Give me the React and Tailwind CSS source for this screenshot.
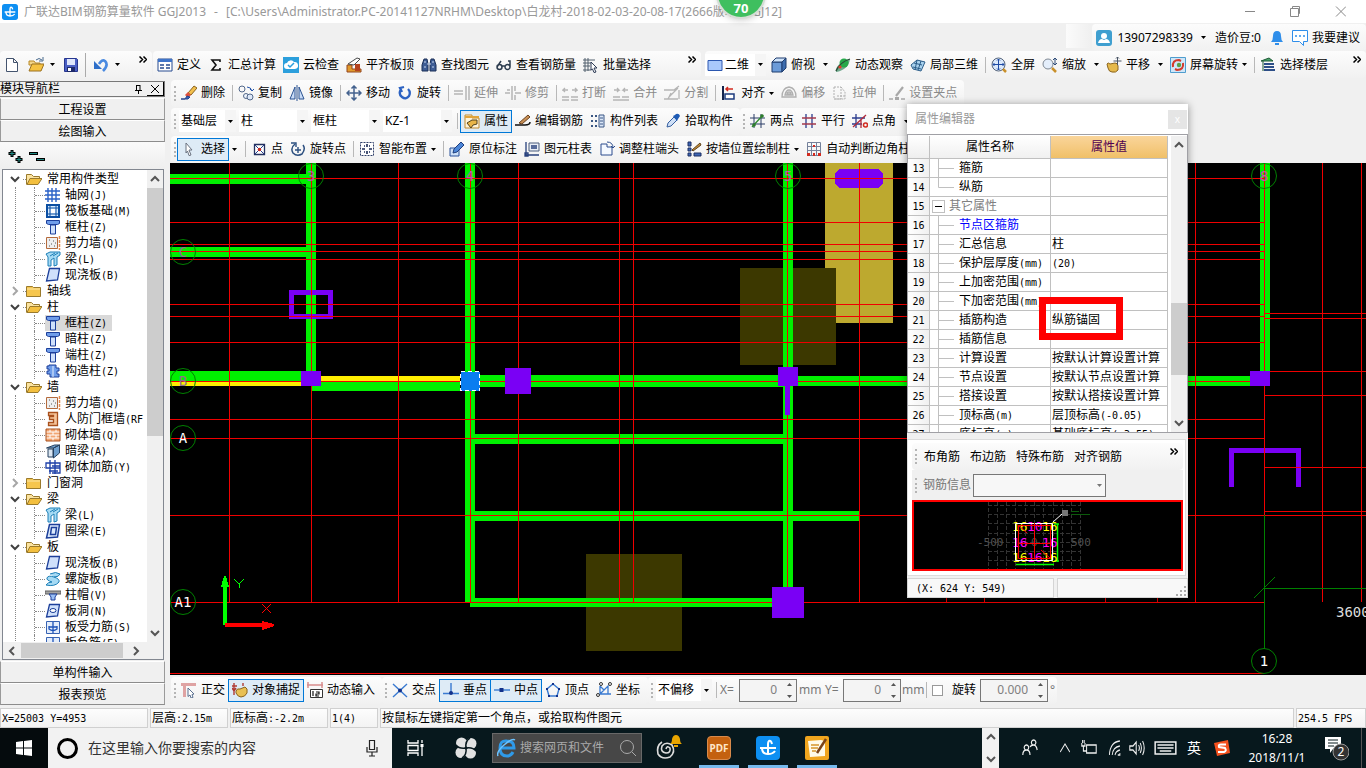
import { Fragment } from 'react';

const ICONS = {
  file: <path d="M2.500 1.500h7l4 4v9h-11zM9.500 1.500v4h4" fill="#fff" stroke="#44546e" />,
  folderOpen: (
    <>
      <path d="M1 4h5l1.500 2H12v2H1z" fill="#f3d58a" stroke="#b98a26" />
      <path d="M1 14 4 7h12l-3 7z" fill="#f5c242" stroke="#9a7120" />
      <path d="M8 3q3-3 6 0M15 0v4h-4" fill="none" stroke="#47688c" />
    </>
  ),
  save: (
    <>
      <path d="M1.500 1.500h12l1 1v12h-13z" fill="#4a5fc4" stroke="#27368f" />
      <path d="M4 2h8v6H4z" fill="#dfe6fb" />
      <path d="M4 10h8v5H4z" fill="#1e2a6b" />
      <path d="M5 11h3v3H5z" fill="#fff" />
    </>
  ),
  undo: (
    <>
      <path d="M6 7q3-5 6-3 4 4-2 10" fill="none" stroke="#4a8ae0" strokeWidth="2.600" />
      <path d="M1 4v8h8z" fill="#2e6fc9" />
    </>
  ),
  define: (
    <>
      <path d="M1 2h14v12H1z" fill="#fff" stroke="#274b8f" />
      <path d="M1 2h14v3H1z" fill="#3f74c9" />
      <path d="M3 8h4M3 11h4M9 8h4M9 11h4" stroke="#274b8f" strokeWidth="1.500" />
    </>
  ),
  sum: <path d="M12 5V3H4l4 5-4 5h8v-2" fill="none" stroke="#111" strokeWidth="1.600" />,
  cloud: (
    <>
      <path d="M0 0h16v16H0z" fill="#2c9fdc" />
      <path d="M4 12a3 3 0 0 1 0-6 4 4 0 0 1 7-1 3.500 3.500 0 0 1 1 7z" fill="#fff" />
      <path d="m5 8 2 2 4-4" fill="none" stroke="#2c9fdc" strokeWidth="1.500" />
    </>
  ),
  slab: (
    <>
      <path d="M1 8h5v4h9v3H1z" fill="#e09a2c" stroke="#93451c" />
      <path d="M9 7h5v7H9z" fill="#b5431f" />
      <path d="M2 7 11 1l3 1-6 6z" fill="#fff" stroke="#4a4a4a" />
    </>
  ),
  find: (
    <>
      <path d="M3 2h3l1 5v7H1V8zM10 2h3l2 6v6H9V7z" fill="#3d5c94" stroke="#1b2f57" />
      <path d="M6 7h4M3 10h2M11 10h2M4 4v2M12 4v2" stroke="#c9d8f2" />
    </>
  ),
  glasses: (
    <path
      d="M1 10a2.500 2.500 0 1 0 5 0 2.500 2.500 0 1 0-5 0M9 10a2.500 2.500 0 1 0 5 0 2.500 2.500 0 1 0-5 0M6 9h3M1 10 5 4M14 10V4h-2"
      fill="none"
      stroke="#2b3b4e"
      strokeWidth="1.500"
    />
  ),
  batch: (
    <>
      <path d="M2 1v14M0 3h12M0 6h8M0 9h7M5 1v13M0 13h8" stroke="#53606f" />
      <path d="m8 5 6 6H11l2 4-2 .5-1.500-3.500L8 13z" fill="#fff" stroke="#2c3a55" />
    </>
  ),
  rect2d: <path d="M1 3.500h14v10H1z" fill="#a9c8fb" stroke="#2c57b0" />,
  cube: (
    <>
      <path d="M1 5h10v10H1z" fill="#6b9bd8" stroke="#1f3d6e" />
      <path d="m1 5 4-4h10l-4 4z" fill="#cfe3fa" stroke="#1f3d6e" />
      <path d="m11 5 4-4v10l-4 4z" fill="#3c6cae" stroke="#1f3d6e" />
    </>
  ),
  orbit: (
    <>
      <path d="M1 15q-1-5 5-9T15 2q-1 7-6 10t-8 3z" fill="#6fa88c" />
      <circle cx="9" cy="6" r="4.500" fill="#27a84a" />
      <path d="M1 14Q5 5 15 2" fill="none" stroke="#274c36" strokeWidth="1.300" />
      <circle cx="5" cy="10" r="1.600" fill="#e23b2b" />
    </>
  ),
  local3d: (
    <>
      <path d="m1 8 6-5 8 2-4 9-8-2z" fill="#a9d2ee" stroke="#2b5c88" />
      <path d="m4 6 8 2M3 10l8 2M7 3 5 13M11 4 8 13" stroke="#2b5c88" fill="none" />
    </>
  ),
  full: (
    <>
      <circle cx="7.500" cy="7.500" r="6.500" fill="#dbe9fb" stroke="#56657c" />
      <path d="M7.500 2v11M2 7.500h11M6 3.500 7.500 2 9 3.500M6 11.500 7.500 13 9 11.500M3.500 6 2 7.500 3.500 9M11.500 6 13 7.500 11.500 9" fill="none" stroke="#1f4ba5" />
      <path d="m12 12 3 3" stroke="#c9902b" strokeWidth="2.500" />
    </>
  ),
  zoom: (
    <>
      <circle cx="6" cy="7" r="5" fill="#e4eefb" stroke="#7f8893" />
      <path d="m10 11 4 4" stroke="#c9902b" strokeWidth="2.500" />
      <path d="M13 1v6M11 3l2-2 2 2M11 6l2 2 2-2" fill="none" stroke="#2f4c79" />
    </>
  ),
  pan: (
    <>
      <path d="M1 7q1-2 3 0l5-1q3 0 3 3v4q-2 3-6 2-3 0-4-4z" fill="#e5b94c" stroke="#8a6420" />
      <path d="M11.500 0v8M7.500 4h8M10 1.500 11.500 0 13 1.500" fill="none" stroke="#4a5666" />
    </>
  ),
  screen: (
    <>
      <path d="M.5.5h15v15H.5z" fill="#cfe6f8" stroke="#4f9dce" />
      <path d="M3 10q-1-7 6-7l2 1M13 6q1 7-6 7l-2-1" fill="none" stroke="#d43a2c" strokeWidth="2" />
      <circle cx="9" cy="8" r="2.200" fill="#58a14a" />
    </>
  ),
  floors: (
    <>
      <path d="M1 4 9 1l4 3z" fill="#4ba36a" stroke="#1d5a36" />
      <path d="M4 7h10M4 10h10M4 13h11" stroke="#2c4e87" strokeWidth="2" />
      <path d="M3 4v10" stroke="#1d5a36" />
    </>
  ),
  erase: (
    <>
      <path d="m7 8 6-7 3 2-6 7z" fill="#f3c04d" stroke="#8a6420" />
      <path d="m4 10 3-3 3 3-3 3z" fill="#e0523c" />
      <path d="M0 14h4l2-3 3 1-2 2z" fill="#3a5fb0" stroke="#26448e" />
    </>
  ),
  copy: (
    <>
      <circle cx="4" cy="4" r="3" fill="none" stroke="#52688a" />
      <circle cx="8" cy="11" r="2.500" fill="#eef4fd" stroke="#52688a" />
      <circle cx="12" cy="12" r="3" fill="#dde8f8" stroke="#52688a" />
      <path d="M9 2q4 0 5 4M12 4l2 2 2-2" fill="none" stroke="#2453a8" />
    </>
  ),
  mirror: <path d="M6 2v12H1zM10 2v12h5zM8 0v16" fill="#c9dcf7" stroke="#2b5391" />,
  move: <path d="M8 1v14M1 8h14M5.500 3.500 8 1l2.500 2.500M5.500 12.500 8 15l2.500-2.500M3.500 5.500 1 8l2.500 2.500M12.500 5.500 15 8l-2.500 2.500" fill="none" stroke="#44628e" strokeWidth="1.500" />,
  rotate: <path d="M4 4q-3 5 1 8 4 3 7-1 2-4-1-7M7 2 3 3l2 4" fill="none" stroke="#2c62c2" strokeWidth="2.300" />,
  extend: <path d="M0 6h9M0 9h9M12 1v14M15 1v14" stroke="#b5b5b5" strokeWidth="1.500" fill="none" />,
  trim: <path d="M0 8h5M10 8h6M7 1v14M10 1v5M10 10v5M2 5h3" stroke="#b5b5b5" strokeWidth="1.500" fill="none" />,
  break: <path d="M0 12h7M9 12h7M0 15h7M9 15h7M6 5H1l2-2M1 5l2 2M10 5h5l-2-2M15 5l-2 2" stroke="#b5b5b5" fill="none" strokeWidth="1.300" />,
  merge: <path d="M0 12h7M9 12h7M0 15h16M1 5h5L4 3M6 5 4 7M15 5h-5l2-2M10 5l2 2" stroke="#b5b5b5" fill="none" strokeWidth="1.300" />,
  split: <path d="M0 5h10l5-4M0 14h14M4 14l3-6M15 5v9M5 12l9-9" stroke="#b5b5b5" fill="none" strokeWidth="1.300" />,
  align: (
    <>
      <path d="M2 1v14" stroke="#14244c" strokeWidth="2" />
      <path d="M4 9h9v5H4z" fill="#fff" stroke="#1d3b7e" strokeWidth="1.500" />
      <path d="M12 4H5M7 2 5 4l2 2" stroke="#d22a1f" fill="none" strokeWidth="1.500" />
    </>
  ),
  offset: <path d="M1 12q0-9 7-10 7 1 7 10zM4 10q1-5 4-5t4 5zM6 9a2 2 0 0 1 4 0z" fill="none" stroke="#b0b0b0" strokeWidth="1.300" />,
  stretch: <path d="M2 2h7v12H2zM9 2l4 5v7H2M5 11h9" fill="none" stroke="#b0b0b0" strokeDasharray="2 1" />,
  grips: (
    <>
      <path d="M0 14h4M12 14h4" stroke="#a8a8a8" strokeWidth="1.500" />
      <path d="M6 12h4v3H6z" fill="#a8a8a8" />
      <path d="m7 11 7-9" stroke="#a8a8a8" strokeWidth="2.200" />
    </>
  ),
  props: (
    <>
      <path d="M1 2h7v3h7v10H1z" fill="#fdf3d9" stroke="#c08a2e" />
      <path d="M1 4h14" stroke="#e0a43c" strokeWidth="2" />
      <path d="M3 10l5-3h5v4l-4 1-2 3z" fill="#e9b548" stroke="#53431c" />
    </>
  ),
  editBar: (
    <>
      <path d="M0 12h10q5 0 5-3" fill="none" stroke="#111" strokeWidth="1.500" />
      <path d="m4 10 9-8 2 2-8 7z" fill="#c98f55" stroke="#6a4320" />
    </>
  ),
  list: (
    <>
      <path d="M1 3h2M1 8h2M1 13h2M5 3h2M5 8h2M5 13h2" stroke="#3a5784" strokeWidth="2" />
      <path d="M9 2h5v12H9z" fill="#dbe7f8" stroke="#3a5784" />
      <path d="M10 5h3M10 8h3M10 11h3" stroke="#3a5784" />
    </>
  ),
  picker: (
    <>
      <path d="m2 14 1-4 6-6 3 3-6 6z" fill="#cfe0f7" stroke="#355f9f" />
      <path d="m8 3 2-1 1-1q3-1 4 2l-2 3-1 2z" fill="#1e5bb5" />
    </>
  ),
  twoPoint: (
    <>
      <path d="M0 5h15M0 11h15M4 1v14M11 1v14" stroke="#2b3d67" />
      <path d="M2 14 13 2" stroke="#2e8b2e" strokeWidth="1.300" />
      <circle cx="4" cy="12" r="1.800" fill="#2d7b2d" />
      <circle cx="12" cy="3" r="1.800" fill="#2d7b2d" />
    </>
  ),
  parallel: (
    <>
      <path d="M5 1v14M11 1v14" stroke="#2b3d8f" strokeWidth="1.300" />
      <path d="M1 5h14M1 11h14" stroke="#a43a4e" strokeWidth="1.300" />
    </>
  ),
  angle: (
    <>
      <path d="M0 5h13M4 1v14M0 11h10" stroke="#2b3d8f" strokeWidth="1.300" />
      <path d="M1 14 14 2M9 6v9" stroke="#b32a3a" strokeWidth="1.300" />
      <circle cx="13.500" cy="12" r="2" fill="none" stroke="#d22a1f" strokeWidth="1.500" />
    </>
  ),
  select: <path d="m5 2 6 7H8l2 5-2 .6L6.500 10 5 12z" fill="#fff" stroke="#6a7280" />,
  point: (
    <>
      <path d="M3.500 3.500h10v10h-10z" fill="#fff" stroke="#23305e" strokeWidth="1.300" />
      <path d="m4 4 9 9M13 4l-9 9" stroke="#27408f" />
      <circle cx="8.500" cy="8.500" r="1.700" fill="#d22a1f" />
    </>
  ),
  rotPoint: (
    <>
      <path d="M5 3q-5 4-2 9 4 4 9 1 4-5 1-9" fill="none" stroke="#2d5080" strokeWidth="1.500" />
      <path d="M8 6v6M5 9h6M1 2h5v4" stroke="#2d5080" strokeWidth="1.400" fill="none" />
    </>
  ),
  smart: (
    <>
      <path d="M1.500 1.500h13v13h-13z" fill="#fff" stroke="#30406a" strokeDasharray="2 1" />
      <path d="M5 5h1M10 5h1M5 11h1M10 11h1M8 3v3M8 10v3M3 8h3M10 8h3" stroke="#1a2a55" strokeWidth="1.600" />
    </>
  ),
  annotate: (
    <>
      <path d="M1 7h9v8H1z" fill="#cde0f8" stroke="#28519b" />
      <path d="m4 12 1-4 7-7 3 3-7 7z" fill="#4c86d8" stroke="#1f3e7c" />
    </>
  ),
  colTable: (
    <>
      <path d="M5 2h10v8H5z" fill="#e8edf5" stroke="#4a5c7c" />
      <path d="M7 5h6M7 7h6M2 1v13h13M1 12h3v3H1z" stroke="#27407c" fill="none" strokeWidth="1.300" />
    </>
  ),
  colEnd: (
    <>
      <path d="M2 3h6v3h5v8H2z" fill="#f5f9ff" stroke="#2d4d8e" />
      <path d="M8 1q6 0 6 6M12 5l2 2 2-2" fill="none" stroke="#2d4d8e" />
    </>
  ),
  wallCol: (
    <>
      <path d="M2 1h3v4H2zM2 7h3v3H2zM2 12h3v3H2zM8 12h7v3H8z" fill="#3e66b5" stroke="#1d2f63" />
      <path d="m6 9 8-7 1 2-8 6z" fill="#c98f3a" stroke="#5e431c" />
    </>
  ),
  cornerCol: (
    <>
      <path d="M1.500 1.500h13v13h-13zM1 5.500h14M1 9.500h14M5.500 1v14M10.500 1v14" stroke="#74819b" fill="none" />
      <path d="M1 12h3v3H1zM12 12h3v3h-3zM7 4h2v2H7zM7 12h2v3H7z" fill="#d22a1f" />
    </>
  ),
  ortho: (
    <>
      <path d="M0 1h15v3H5v11H2V4H0z" fill="#dfa3a3" />
      <path d="m7 6 6 6-2 .5 1 3-2 .5-1-3-2 1.500z" fill="#fff" stroke="#5b7190" />
    </>
  ),
  snap: (
    <>
      <path d="M2 1v12M0 6l2 3 2-3M11 1v3M0 4h5" stroke="#b03a33" fill="none" strokeWidth="1.400" />
      <path d="M4 9q1-3 4-2l5-2q3 1 2 6-2 4-6 4-3 0-5-4z" fill="#e8c054" stroke="#8a6420" />
    </>
  ),
  dynInput: (
    <>
      <path d="M0 3h16M1 0v6M15 0v6" stroke="#d88d8d" strokeWidth="1.500" />
      <path d="M3.500 7.500h12v8h-12z" fill="#fff" stroke="#333" />
      <path d="M6 9v5M9 10h3v2H9v2h3" fill="none" stroke="#111" strokeWidth="1.200" />
    </>
  ),
  cross: (
    <>
      <path d="m1 2 14 13M15 2 1 15" stroke="#3a7ad1" strokeWidth="1.400" />
      <circle cx="8" cy="8.500" r="2" fill="#12318b" />
    </>
  ),
  perp: (
    <>
      <path d="M8 1v10M0 11.500h16" stroke="#3a7ad1" strokeWidth="1.400" />
      <circle cx="8" cy="11" r="2" fill="#12318b" />
    </>
  ),
  mid: (
    <>
      <path d="M0 8h16" stroke="#3a7ad1" strokeWidth="1.400" />
      <path d="M5.500 6h4v4h-4z" fill="#12318b" />
    </>
  ),
  vertex: (
    <>
      <path d="m8 2 6 5-2 7H4L2 7z" fill="none" stroke="#3a7ad1" strokeWidth="1.400" />
      <path d="M7 1h2v2H7zM13 6h2v2h-2zM11 13h2v2h-2zM3 13h2v2H3zM1 6h2v2H1z" fill="#12318b" />
    </>
  ),
  coord: (
    <>
      <path d="M4 4v8h11M4 12l8-8v8M8 8l-4-4" stroke="#3a7ad1" fill="none" strokeWidth="1.300" />
      <circle cx="2" cy="13" r="1.500" fill="none" stroke="#333" />
      <circle cx="5" cy="2" r="1.500" fill="none" stroke="#333" />
      <circle cx="14" cy="2" r="1.500" fill="none" stroke="#333" />
    </>
  ),
  folder: (
    <>
      <path d="M.5 3.500h6l1 1h7v9H.5z" fill="#f6c64e" stroke="#9a7a2c" />
      <path d="M1 6h13" stroke="#fbe6a8" />
    </>
  ),
  treeOpen: (
    <>
      <path d="M.5 13.500v-10h5l2 2h6v2" fill="#fbe3a0" stroke="#9a7a2c" />
      <path d="m1 13.500 3-6h12l-4 6z" fill="#f3bf3e" stroke="#9a7a2c" />
    </>
  ),
  axis: <path d="M0 4h15M0 8h15M0 12h15M3 1v14M7 1v14M11 1v14" stroke="#2b62c8" strokeWidth="1.400" />,
  raft: (
    <>
      <path d="M2 2h12v12H2z" fill="#d8ecff" stroke="#0b4ea2" strokeWidth="2" />
      <path d="M5 2v12M11 2v12M2 5h12M2 11h12" stroke="#0b4ea2" />
      <path d="M6 6h4v4H6z" fill="#fff" />
    </>
  ),
  column: (
    <>
      <path d="M1.500 1.500h13v3l-2 1h-9l-2-1z" fill="#6f9dea" stroke="#1c3f9a" />
      <path d="M5.500 6h5v9h-5z" fill="#cfe0fb" stroke="#1c3f9a" />
    </>
  ),
  shear: (
    <>
      <path d="M1.500 2.500h11v11h-11z" fill="#efefef" stroke="#b56a3c" />
      <path d="M4 5h1M8 6h1M6 9h1M4 11h1M9 11h1M10 8h1" stroke="#555" />
      <path d="M14.500 1v14" stroke="#e28a4e" strokeWidth="1.500" strokeDasharray="3 1" />
    </>
  ),
  beam: (
    <>
      <path d="M1 3 5 1h10v3l-3 2v8l-3 1V7L6 9v6H3V6z" fill="#a5daf4" stroke="#1d7fb7" />
      <path d="m5 5 5-3M8 5l5-3" stroke="#1d7fb7" />
    </>
  ),
  plate: <path d="m4.500 1.500 10 0-2 11.500-11 1z" fill="#cfe0fb" stroke="#1c3f9a" strokeWidth="1.300" />,
  structCol: (
    <>
      <path d="M4 2h7v3h3v3h-2v3h2v3H5v-3H2V8h2V6H2V3h2z" fill="#6f9dea" stroke="#1c3f9a" />
      <path d="M8 3v11" stroke="#e6effd" />
    </>
  ),
  doorWall: <path d="M3.500 1.500h9v13h-9v-3h5v-3h-4v-3h4v-1h-5z" fill="#f6c49a" stroke="#a9501c" strokeWidth="1.300" />,
  brick: (
    <>
      <path d="M1 2h14v12H1z" fill="#f2a673" />
      <path d="M1 5h14M1 8h14M1 11h14M5 2v3M11 2v3M8 5v3M5 8v3M11 8v3M8 11v3" stroke="#fff" />
      <path d="M1 2h14v12H1z" fill="none" stroke="#a9501c" />
    </>
  ),
  hiddenBeam: (
    <>
      <path d="m1.500 5 8-3h5l-6 3zM8.500 5l6-3v8l-6 5z" fill="#6fa0cf" stroke="#27405e" />
      <path d="M3 6h5v8H3z" fill="#dbe6f1" stroke="#27405e" />
    </>
  ),
  masonry: <path d="M1 4h14v5H1zM4 12h9M5 1v14M10 1v14M7 7h8v7H7" fill="none" stroke="#1c3fa8" strokeWidth="1.300" />,
  ringBeam: <path d="m4.500 1.500 10 0-2 12.500-11 1zM6.500 4.500h5l-1 7h-5z" fill="#dbe9fc" stroke="#1c3f9a" strokeWidth="1.500" />,
  spiral: <path d="M5 3q6-3 10 0-1 3-6 3 6 2 5 5-4 5-13 3 2-3 6-3-6-2-5-4 1-3 7-1" fill="#a5daf4" stroke="#1d7fb7" />,
  cap: (
    <>
      <path d="M0 4h16v3H0z" fill="#a3a3a3" stroke="#5d5d5d" />
      <path d="M4 7h8l-2 3v3H6v-3z" fill="#9bc0f5" stroke="#1c3f9a" />
    </>
  ),
  hole: (
    <>
      <path d="m4.500 1.500 10 0-2 11.500-11 1z" fill="#cfe0fb" stroke="#1c3f9a" strokeWidth="1.300" />
      <ellipse cx="8" cy="7.500" rx="3" ry="2" fill="#fff" stroke="#1c3f9a" />
    </>
  ),
  rebar: (
    <>
      <path d="M1.500 2.500h13v12h-13z" fill="#e3edfb" stroke="#3763b3" />
      <path d="M8 3v11M4 7v3q4 3 8 0V7M4 8h8" fill="none" stroke="#1c52b8" strokeWidth="1.300" />
    </>
  ),
};

const Icon = ({ name }) => (
  <svg className="h-4 w-4 shrink-0" viewBox="0 0 16 16" aria-hidden="true">
    {ICONS[name]}
  </svg>
);

const Arrow = () => (
  <svg className="h-[3px] w-[5px] shrink-0" viewBox="0 0 5 3" aria-hidden="true">
    <path d="M0 0h5L2.500 3z" fill="currentColor" />
  </svg>
);

const Logo = ({ className }) => (
  <svg className={className} viewBox="0 0 24 24" aria-hidden="true">
    <rect width="24" height="24" rx="4" fill="#0d8ff2" />
    <path d="M16 8q-1-4-3-3-1 1-1 3v10M4 12h16M6 12q0 6 6 6 5 0 7-3" fill="none" stroke="#fff" strokeWidth="2" />
  </svg>
);

// Fixed pitch look: ascii runs are half the width of a CJK glyph
const Song = ({ children }) =>
  children.split(/([\x20-\x7e]+)/).map((part, i) =>
    i % 2 ? (
      <span key={i} className="font-['DejaVu_Sans_Mono',monospace] text-[10px] leading-none whitespace-pre">
        {part}
      </span>
    ) : (
      <Fragment key={i}>{part}</Fragment>
    )
  );

const Sep = () => <span className="mr-[5px] h-4 w-px shrink-0 bg-[#b8b8b8]" />;

const Grip = () => <span className="mr-[5px] ml-[3px] h-[15px] w-0 shrink-0 border-l-2 border-dotted border-[#b5b5b5]" />;

const Tool = ({ icon, label, active, disabled, arrow }) => {
  const look = active ? 'h-[23px] border border-[#0078d7] bg-[#deebf6] px-[3px] mr-[3px] -ml-1' : 'mr-[7px]';
  return (
    <button disabled={disabled} className={`flex shrink-0 items-center whitespace-nowrap ${look} ${disabled ? 'text-[#8a8a8a]' : ''}`}>
      <Icon name={icon} />
      <span className="ml-1">{label}</span>
      {arrow && (
        <span className={arrow === 'wide' ? 'flex w-[13px] justify-end' : 'flex w-[9px] justify-end'}>
          <Arrow />
        </span>
      )}
    </button>
  );
};

const Tools = ({ items }) => items.map((item, i) => (item === '|' ? <Sep key={i} /> : <Tool key={i} {...item} />));

const Group = ({ children, className = '' }) => (
  <div className={`flex h-[27px] shrink-0 items-center rounded-sm bg-gradient-to-b from-[#fcfcfc] to-[#f1f1f1] ${className}`}>{children}</div>
);

const Combo = ({ label, value, className }) => (
  <label className={`relative flex shrink-0 items-center bg-white ${className}`}>
    <select aria-label={label} className="h-[22px] w-full appearance-none pl-[2px] outline-none">
      <option>{value}</option>
    </select>
    <span className="pointer-events-none absolute right-0 flex h-[22px] w-[11px] items-center justify-center bg-[#f5f5f5]">
      <Arrow />
    </span>
  </label>
);

const More = () => (
  <button aria-label="更多" className="mr-[5px] ml-auto flex h-[21px] items-start pt-[2px]">
    <svg className="h-[7px] w-2" viewBox="0 0 8 7">
      <path d="m.5.5 3 3-3 3M4.500.5l3 3-3 3" fill="none" stroke="#000" strokeWidth="1.500" />
    </svg>
  </button>
);

const fileTools = [
  { icon: 'define', label: '定义' },
  { icon: 'sum', label: '汇总计算' },
  { icon: 'cloud', label: '云检查' },
  { icon: 'slab', label: '平齐板顶' },
  { icon: 'find', label: '查找图元' },
  { icon: 'glasses', label: '查看钢筋量' },
  { icon: 'batch', label: '批量选择' },
];

const viewTools = [
  { icon: 'cube', label: '俯视', arrow: 'wide' },
  { icon: 'orbit', label: '动态观察' },
  { icon: 'local3d', label: '局部三维' },
  '|',
  { icon: 'full', label: '全屏' },
  { icon: 'zoom', label: '缩放', arrow: 'wide' },
  { icon: 'pan', label: '平移', arrow: 'wide' },
  { icon: 'screen', label: '屏幕旋转', arrow: 'tight' },
  '|',
  { icon: 'floors', label: '选择楼层' },
];

const editTools = [
  { icon: 'erase', label: '删除' },
  '|',
  { icon: 'copy', label: '复制' },
  { icon: 'mirror', label: '镜像' },
  '|',
  { icon: 'move', label: '移动' },
  { icon: 'rotate', label: '旋转' },
  '|',
  { icon: 'extend', label: '延伸', disabled: true },
  { icon: 'trim', label: '修剪', disabled: true },
  '|',
  { icon: 'break', label: '打断', disabled: true },
  { icon: 'merge', label: '合并', disabled: true },
  { icon: 'split', label: '分割', disabled: true },
  '|',
  { icon: 'align', label: '对齐', arrow: 'tight' },
  { icon: 'offset', label: '偏移', disabled: true },
  { icon: 'stretch', label: '拉伸', disabled: true },
  '|',
  { icon: 'grips', label: '设置夹点', disabled: true },
];

const memberTools = [
  { icon: 'props', label: '属性', active: true },
  { icon: 'editBar', label: '编辑钢筋' },
  { icon: 'list', label: '构件列表' },
  { icon: 'picker', label: '拾取构件' },
];

const axisTools = [
  { icon: 'twoPoint', label: '两点' },
  { icon: 'parallel', label: '平行' },
  { icon: 'angle', label: '点角', arrow: 'wide' },
];

const drawTools = [
  { icon: 'point', label: '点' },
  { icon: 'rotPoint', label: '旋转点' },
  '|',
  { icon: 'smart', label: '智能布置', arrow: 'tight' },
  '|',
  { icon: 'annotate', label: '原位标注' },
  { icon: 'colTable', label: '图元柱表' },
  { icon: 'colEnd', label: '调整柱端头' },
  { icon: 'wallCol', label: '按墙位置绘制柱', arrow: 'tight' },
  { icon: 'cornerCol', label: '自动判断边角柱' },
];

const tree = [
  { label: '常用构件类型', open: true, items: [['axis', '轴网(J)'], ['raft', '筏板基础(M)'], ['column', '框柱(Z)'], ['shear', '剪力墙(Q)'], ['beam', '梁(L)'], ['plate', '现浇板(B)']] },
  { label: '轴线', items: [] },
  { label: '柱', open: true, items: [['column', '框柱(Z)', true], ['column', '暗柱(Z)'], ['column', '端柱(Z)'], ['structCol', '构造柱(Z)']] },
  { label: '墙', open: true, items: [['shear', '剪力墙(Q)'], ['doorWall', '人防门框墙(RF'], ['brick', '砌体墙(Q)'], ['hiddenBeam', '暗梁(A)'], ['masonry', '砌体加筋(Y)']] },
  { label: '门窗洞', items: [] },
  { label: '梁', open: true, items: [['beam', '梁(L)'], ['ringBeam', '圈梁(E)']] },
  { label: '板', open: true, items: [['plate', '现浇板(B)'], ['spiral', '螺旋板(B)'], ['cap', '柱帽(V)'], ['hole', '板洞(N)'], ['rebar', '板受力筋(S)'], ['rebar', '板负筋(F)']] },
];

const Chevron = ({ dir, className = '' }) => {
  const paths = { down: 'm1 3 4 4 4-4', up: 'm1 7 4-4 4 4', left: 'M7 1 3 5l4 4', right: 'm3 1 4 4-4 4' };
  return (
    <svg className={`h-[10px] w-[10px] shrink-0 ${className}`} viewBox="0 0 10 10" aria-hidden="true">
      <path d={paths[dir]} fill="none" stroke="currentColor" strokeWidth="2" />
    </svg>
  );
};

const SideButton = ({ children }) => (
  <button className="h-[22px] w-full shrink-0 border border-t-white border-r-[#9a9a9a] border-b-[#8c8c8c] border-l-[#9a9a9a] bg-[#f0f0f0] pt-[2px]">{children}</button>
);

const Sidebar = () => (
  <aside className="mr-[5px] flex w-[165px] shrink-0 flex-col bg-[#f0f0f0] pt-[2px] pb-[2px] leading-4">
    <div className="mb-px flex h-4 shrink-0 items-center border-y border-r border-[#777]">
      <span className="flex-1">模块导航栏</span>
      <svg className="mr-[5px] h-[9px] w-[7px]" viewBox="0 0 7 9" aria-hidden="true">
        <path d="M1.500 0v5M5 0v5M0 5.500h7M3.500 5v4M1 .5h4" stroke="#000" fill="none" />
      </svg>
      <button aria-label="关闭" className="flex h-[14px] w-[17px] items-center justify-center border-r border-b border-black">
        <svg className="h-2 w-2" viewBox="0 0 8 8">
          <path d="m0 0 8 8M8 0 0 8" stroke="#000" />
        </svg>
      </button>
    </div>
    <SideButton>工程设置</SideButton>
    <SideButton>绘图输入</SideButton>
    <div className="flex h-[27px] shrink-0 items-center gap-1 bg-gradient-to-b from-[#fafafa] to-[#eee] pl-[6px]">
      <button aria-label="全部展开">
        <svg className="h-[18px] w-[18px]" viewBox="0 0 18 18">
          <path d="M6 3v7M2.500 6.500h7M13 9v7M9.500 12.500h7" stroke="#000" strokeWidth="3" />
          <path d="M6 4v5M3.500 6.500h5M13 10v5M10.500 12.500h5" stroke="#1f8a83" />
        </svg>
      </button>
      <button aria-label="全部折叠">
        <svg className="h-[18px] w-[18px]" viewBox="0 0 18 18">
          <path d="M1 6.500h9M8 12.500h9" stroke="#000" strokeWidth="3" />
          <path d="M2 6.500h7M9 12.500h7" stroke="#1f8a83" />
        </svg>
      </button>
    </div>
    <div className="mr-px ml-[2px] flex min-h-0 flex-1 flex-col border border-[#828790] bg-white">
      <div className="flex min-h-0 flex-1">
        <ul className="flex-1 overflow-hidden pt-px whitespace-nowrap">
          {tree.map((node) => (
            <li key={node.label}>
              <div className="flex h-4 items-center">
                <Chevron dir={node.open ? 'down' : 'right'} className={node.open ? 'ml-[7px] text-[#404040]' : 'ml-[7px] text-[#a6a6a6]'} />
                <span className="ml-[3px] w-[3px] border-t border-dotted border-[#888]" />
                <Icon name={node.open ? 'treeOpen' : 'folder'} />
                <span className="ml-[5px]">{node.label}</span>
              </div>
              <ul className="ml-[12px] border-l border-dotted border-[#888]">
                {node.items.map(([icon, label, selected]) => (
                  <li key={label} className="ml-[18px] flex h-4 items-center border-l border-dotted border-[#888]">
                    <span className="w-[10px] border-t border-dotted border-[#888]" />
                    <button className={selected ? 'flex h-4 items-center bg-[#d9d9d9] pr-[5px]' : 'flex h-4 items-center'}>
                      <Icon name={icon} />
                      <span className="ml-1">
                        <Song>{label}</Song>
                      </span>
                    </button>
                  </li>
                ))}
              </ul>
            </li>
          ))}
        </ul>
        <div className="flex w-4 shrink-0 flex-col items-center bg-[#f0f0f0] py-1 text-[#555]">
          <Chevron dir="up" />
          <span className="mt-1 h-[248px] w-4 bg-[#cdcdcd]" />
          <Chevron dir="down" className="mt-auto" />
        </div>
      </div>
      <div className="flex h-[17px] shrink-0 items-center bg-[#f0f0f0] px-1 text-[#555]">
        <Chevron dir="left" />
        <span className="ml-1 h-[15px] w-[102px] bg-[#cdcdcd]" />
        <Chevron dir="right" className="ml-2" />
      </div>
    </div>
    <div className="mt-px flex flex-col">
      <SideButton>单构件输入</SideButton>
      <SideButton>报表预览</SideButton>
    </div>
  </aside>
);

const gridRows = [178, 222, 244, 251, 259, 304, 316, 342, 381, 419, 438, 515, 602, 673];
const gridRowsRight = [313, 318, 371, 395, 467, 511, 515];
const gridCols = [229, 311, 398, 470, 518, 619, 633, 787, 859, 946, 984, 1105, 1157, 1195, 1322, 1361];

// x, y, width, height
const beams = [
  [170, 174, 136, 10],
  [306, 163, 10, 208],
  [170, 247, 136, 10],
  [170, 371, 131, 10],
  [311, 381, 149, 10],
  [465, 163, 10, 439],
  [475, 375, 312, 12],
  [787, 376, 463, 10],
  [783, 163, 10, 430],
  [475, 434, 308, 10],
  [475, 511, 384, 10],
  [470, 598, 304, 9],
  [1260, 163, 10, 208],
];
const columns = [
  [301, 371, 20, 15],
  [505, 368, 26, 26],
  [778, 367, 20, 19],
  [785, 386, 5, 29],
  [772, 587, 32, 31],
  [1250, 371, 20, 15],
];
const bubbles = [
  [311, 176, '3', '#b05fb0'],
  [470, 176, '4', '#b05fb0'],
  [788, 176, '5', '#b05fb0'],
  [1264, 176, '8', '#d048b0'],
  [183, 252, 'C', '#8f6f8f'],
  [183, 381, 'B', '#8f6f8f'],
  [183, 438, 'A', '#fff'],
  [183, 602, 'A1', '#fff'],
  [1264, 661, '1', '#fff'],
];

const Rects = ({ list, fill }) => list.map(([x, y, w, h]) => <rect key={`${x}-${y}`} x={x} y={y} width={w} height={h} fill={fill} />);

const Drawing = () => (
  <svg className="min-h-0 w-full flex-1 bg-black" viewBox="170 163 1196 512" preserveAspectRatio="xMinYMin slice" fontFamily="DejaVu Sans Mono, monospace">
    <g shapeRendering="crispEdges">
      <rect x="825" y="163" width="68" height="160" fill="#bda92f" />
      <rect x="740" y="268" width="96" height="97" fill="#3c3800" />
      <rect x="586" y="554" width="96" height="97" fill="#3c3800" />
      <rect x="170" y="381" width="131" height="5" fill="#ffee00" />
      <rect x="321" y="376" width="139" height="5" fill="#ffee00" />
      <Rects list={beams} fill="#00f000" />
      <rect x="291.500" y="292.500" width="39" height="24" fill="none" stroke="#7a00f5" strokeWidth="5" />
      <path d="M1231.500 487v-36.500h67V487" fill="none" stroke="#7a00f5" strokeWidth="5" />
      <path d="M839 169h40l4 5v9l-4 5h-40l-4-5v-9z" fill="#7a00f5" />
      <g stroke="#f00000">
        {gridRows.map((y) => (
          <path key={y} d={`M170 ${y + 0.5}H1264`} />
        ))}
        {gridRowsRight.map((y) => (
          <path key={y} d={`M1264 ${y + 0.5}H1366`} />
        ))}
        {gridCols.map((x) => (
          <path key={x} d={`M${x + 0.5} 163V602`} />
        ))}
        <path d="M1264.500 163v352" />
      </g>
      <Rects list={columns} fill="#7a00f5" />
      <rect x="460.500" y="371.500" width="19" height="19" fill="#0a7df0" stroke="#fff" strokeDasharray="4 3" />
      <path d="M1264.500 515v134M1264 588.500h102M1254 598l21-21" stroke="#008000" fill="none" />
      <path d="M223 625v-38h-2l3-11h2l3 11h-2v38z" fill="#00ff00" />
      <path d="M225 623h37v-2l12 3v2l-12 4v-3h-37z" fill="#ff0000" />
      <path d="m234 579 5 5 5-5M239 584v4" stroke="#00ff00" fill="none" />
      <path d="m262 604 9 9M271 604l-9 9" stroke="#ff0000" fill="none" />
    </g>
    {bubbles.map(([x, y, text, color]) => (
      <g key={`${x}-${y}`}>
        <circle cx={x} cy={y} r="12.500" fill="none" stroke="#008000" />
        <text x={x} y={y + 5} fill={color} fontSize="14" textAnchor="middle">
          {text}
        </text>
      </g>
    ))}
    <text x="1336" y="617" fill="#ddd" fontSize="14">
      3600
    </text>
  </svg>
);

const properties = [
  [13, '箍筋', ''],
  [14, '纵筋', ''],
  [15, '其它属性', ''],
  [16, '节点区箍筋', ''],
  [17, '汇总信息', '柱'],
  [18, '保护层厚度(mm)', '(20)'],
  [19, '上加密范围(mm)', ''],
  [20, '下加密范围(mm)', ''],
  [21, '插筋构造', '纵筋锚固'],
  [22, '插筋信息', ''],
  [23, '计算设置', '按默认计算设置计算'],
  [24, '节点设置', '按默认节点设置计算'],
  [25, '搭接设置', '按默认搭接设置计算'],
  [26, '顶标高(m)', '层顶标高(-0.05)'],
  [27, '底标高(m)', '基础底标高(-3.55)'],
];

const PropertyName = ({ id, name }) => {
  if (id === 15) {
    return (
      <span className="flex h-[18px] items-center pl-[2px] text-[#808080]">
        <button aria-label="折叠" className="mr-1 flex h-[13px] w-[13px] items-center justify-center border border-[#c0c0c0]">
          <span className="h-px w-[7px] bg-black" />
        </button>
        {name}
      </span>
    );
  }
  return (
    <span className={id === 16 ? 'flex h-[18px] items-center text-[#0000ff]' : 'flex h-[18px] items-center'}>
      <svg className="mr-[5px] h-[18px] w-6 shrink-0" viewBox="0 0 24 18" aria-hidden="true">
        <path d={id === 14 ? 'M8.500 0v9.500H24' : 'M8.500 0v18M8 9.500h16'} fill="none" stroke="#c0c0c0" />
      </svg>
      <span>
        <Song>{name}</Song>
      </span>
    </span>
  );
};

const SectionPreview = () => (
  <svg className="h-[71px] w-full border-2 border-[#ff0000] bg-black" viewBox="914 502 267 67" fontFamily="DejaVu Sans Mono, monospace">
    <path
      d="M988.500 502v67M997.500 502v67M1006.500 502v67M1015.500 502v67M1025.500 502v67M1034.500 502v67M1043.500 502v67M1053.500 502v67M1062.500 502v67M1071.500 502v67M1080.500 502v67M988 505.500h93M988 514.500h93M988 523.500h93M988 533.500h93M988 542.500h93M988 551.500h93M988 560.500h93"
      stroke="#333"
      strokeDasharray="4 2"
      fill="none"
    />
    <g fill="#505050" fontSize="11">
      <text x="977" y="546">-500</text>
      <text x="1071" y="546">500</text>
      <text x="1031" y="546">0</text>
    </g>
    <path d="M1057.500 524v38M1016 564.500h38M1054 524h5M1054 561h5" stroke="#00ff00" strokeWidth="1.500" />
    <g fontSize="13">
      <text x="1012" y="531" fill="#ffff00">16</text>
      <text x="1027" y="531" fill="#ff00ff">10</text>
      <text x="1042" y="531" fill="#ffff00">16</text>
      <text x="1012" y="547" fill="#ff00ff">16</text>
      <text x="1042" y="547" fill="#ff00ff">16</text>
      <text x="1012" y="562" fill="#ffff00">16</text>
      <text x="1027" y="562" fill="#ff00ff">16</text>
      <text x="1042" y="562" fill="#ffff00">16</text>
    </g>
    <path d="M1015.500 523.500h37v37h-37zM1053 522l9-8" stroke="#fff" fill="none" />
    <path d="M1018.500 525.500h32v33h-32zM1034.500 523v36M1018 543.500h33M1018 525l9 8M1050 558l-9-8" stroke="#ff0000" fill="none" />
    <path d="M1062 510h6v6h-6z" fill="#777" />
    <path d="M1071 511.500h8M1071 514.500h19" stroke="#0b5a0b" />
  </svg>
);

const PropertyPanel = () => (
  <section className="absolute top-[104px] right-[178px] flex w-[281px] flex-col bg-[#f0f0f0] leading-4 shadow-[0_1px_8px_rgba(0,0,0,0.4)]">
    <header className="flex h-[30px] items-center bg-white pl-2 text-[#999]">
      <h2 className="flex-1">属性编辑器</h2>
      <button aria-label="关闭" className="mr-px h-[19px] w-[19px] bg-[#e5e5e5] text-[10px] leading-[17px] text-white">
        x
      </button>
    </header>
    <div className="flex h-[299px] border border-[#a0a0a5] bg-white pt-px">
      <div className="flex-1 overflow-hidden">
        <table className="w-[260px] table-fixed border-separate border-spacing-0 text-left">
          <thead>
            <tr className="h-[23px]">
              <th aria-label="序号" className="w-[22px] border-r border-b border-[#c0c0c0] bg-gradient-to-b from-white to-[#eee]" />
              <th className="w-[121px] border-r border-b border-[#c0c0c0] bg-gradient-to-b from-white to-[#f0f0f0] p-0 text-center font-normal">属性名称</th>
              <th className="border-r border-b border-[#c0c0c0] bg-gradient-to-b from-[#fad59a] to-[#f0c068] p-0 text-center font-normal text-[#500050]">属性值</th>
            </tr>
          </thead>
          <tbody>
            {properties.map(([id, name, value]) => (
              <tr key={id} className="h-[19px] leading-4 whitespace-nowrap">
                <td className="border-r border-b border-[#c0c0c0] bg-gradient-to-r from-white to-[#f0f0f0] p-0 text-center">
                  <Song>{String(id)}</Song>
                </td>
                <td className="overflow-hidden border-r border-b border-[#c0c0c0] p-0">
                  <PropertyName id={id} name={name} />
                </td>
                <td className="border-r border-b border-[#c0c0c0] p-0 pl-px">
                  <Song>{value}</Song>
                </td>
              </tr>
            ))}
          </tbody>
        </table>
      </div>
      <div className="flex w-4 shrink-0 flex-col items-center bg-[#f0f0f0] py-1 text-[#555]">
        <Chevron dir="up" />
        <span className="mt-[153px] h-[72px] w-4 bg-[#cdcdcd]" />
        <Chevron dir="down" className="mt-auto" />
      </div>
    </div>
    <div className="mt-[6px] mr-[2px] flex flex-col border border-[#dcdcdc] bg-white pt-[3px] pr-[2px] pb-1 pl-1">
      <Group>
        <Grip />
        <button className="mr-[10px] ml-[2px]">布角筋</button>
        <button className="mr-[10px]">布边筋</button>
        <button className="mr-[10px]">特殊布筋</button>
        <button>对齐钢筋</button>
        <More />
      </Group>
      <div className="flex h-[30px] items-center bg-[#f0f0f0] text-[#777]">
        <Grip />
        <label htmlFor="bar-info" className="mr-[2px] ml-px">钢筋信息</label>
        <span className="relative flex items-center">
          <select id="bar-info" className="h-[23px] w-[133px] appearance-none border border-[#777] bg-[#f7f7f7]" />
          <span className="pointer-events-none absolute right-1">
            <Arrow />
          </span>
        </span>
      </div>
      <SectionPreview />
    </div>
    <footer className="mt-[2px] flex h-5 gap-[3px]">
      <span className="w-[147px] border border-[#d4d4d4] bg-[#f8f8f8] pl-2 leading-[17px]">
        <Song>(X: 624 Y: 549)</Song>
      </span>
      <span className="flex flex-1 items-end justify-end border border-[#d4d4d4] bg-[#f8f8f8] p-px">
        <svg className="h-[10px] w-[10px]" viewBox="0 0 10 10" aria-hidden="true">
          <path d="M8 0h2v2H8zM4 4h2v2H4zM8 4h2v2H8zM0 8h2v2H0zM4 8h2v2H4zM8 8h2v2H8z" fill="#aaa" />
        </svg>
      </span>
    </footer>
    <div className="pointer-events-none absolute top-[193px] left-[132px] h-[43px] w-[84px] border-[7px] border-[#ff0000]" />
  </section>
);

const Spin = ({ id, value, className }) => (
  <span className={`flex h-[23px] shrink-0 items-center border border-[#777] bg-[#f4f4f4] ${className}`}>
    <input id={id} aria-label={id} defaultValue={value} className="w-0 flex-1 pr-[5px] text-right text-[#808080] outline-none" />
    <span className="flex w-[14px] flex-col items-center gap-[9px] text-[#555]">
      <span className="rotate-180">
        <Arrow />
      </span>
      <Arrow />
    </span>
  </span>
);

const SnapBar = () => (
  <div className="flex h-8 shrink-0 items-center overflow-hidden bg-[#f0f0f0] pb-[2px] pl-px">
    <Group className="w-[211px]">
      <Grip />
      <Tool icon="ortho" label="正交" />
      <Tool icon="snap" label="对象捕捉" active />
      <Tool icon="dynInput" label="动态输入" />
    </Group>
    <Group className="w-[266px]">
      <Grip />
      <Tool icon="cross" label="交点" />
      <Tool icon="perp" label="垂点" active />
      <Tool icon="mid" label="中点" active />
      <Tool icon="vertex" label="顶点" />
      <Tool icon="coord" label="坐标" />
    </Group>
    <Group className="w-[409px] text-[#777]">
      <Grip />
      <Combo label="偏移方式" value="不偏移" className="mr-1 -ml-[2px] w-[56px] text-black" />
      <Sep />
      <label htmlFor="offset-x" className="-ml-[2px] w-[17px]">X=</label>
      <Spin id="offset-x" value="0" className="mx-[2px] w-[58px]" />
      <span className="w-6">mm</span>
      <label htmlFor="offset-y" className="ml-[2px] w-[17px]">Y=</label>
      <Spin id="offset-y" value="0" className="mx-px w-[58px]" />
      <span className="w-6">mm</span>
      <Sep />
      <input id="rotate" type="checkbox" className="h-[11px] w-[11px] shrink-0 appearance-none border border-[#999] bg-white" />
      <label htmlFor="rotate" className="mr-1 ml-[9px] text-black">旋转</label>
      <Spin id="angle" value="0.000" className="w-[68px]" />
      <span className="ml-[2px]">°</span>
    </Group>
  </div>
);

const StatusBar = () => {
  const cells = [
    ['X=25003 Y=4953', 'w-[148px]'],
    ['层高:2.15m', 'w-[78px]'],
    ['底标高:-2.2m', 'w-[98px]'],
    ['1(4)', 'w-[48px]'],
    ['按鼠标左键指定第一个角点，或拾取构件图元', 'flex-1'],
    ['254.5 FPS', 'w-[70px]'],
  ];
  return (
    <footer className="flex h-[21px] shrink-0 gap-[2px] bg-[#f0f0f0] pt-px">
      {cells.map(([text, width]) => (
        <span key={text} className={`border border-[#d0d0d0] bg-gradient-to-b from-[#fdfdfd] to-[#f3f3f3] pl-px leading-[18px] whitespace-nowrap ${width}`}>
          <Song>{text}</Song>
        </span>
      ))}
    </footer>
  );
};

const TrayIcon = ({ d, className = 'w-5' }) => (
  <svg className={`h-5 shrink-0 ${className}`} viewBox="0 0 20 20" preserveAspectRatio="none" aria-hidden="true">
    <path d={d} fill="none" stroke="#f0f0f0" strokeWidth="1.300" />
  </svg>
);

const Taskbar = () => (
  <div className="flex h-10 shrink-0 items-center bg-[#07181d] text-white">
    <button aria-label="开始" className="flex h-full w-12 shrink-0 items-center justify-center bg-[#050b0d]">
      <svg className="h-4 w-4" viewBox="0 0 16 16">
        <path d="m0 2 7-1v6.500H0zM8 1l8-1v7.500H8zM0 8.500h7V15l-7-1zM8 8.500h8V16l-8-1z" fill="#fff" />
      </svg>
    </button>
    <label className="flex h-full w-[344px] shrink-0 items-center bg-[#f2f2f2] px-[9px]">
      <span className="h-[21px] w-[21px] shrink-0 rounded-full border-[3px] border-black" />
      <input placeholder="在这里输入你要搜索的内容" className="ml-[10px] flex-1 text-[14px] text-black outline-none placeholder:text-[#333]" />
      <svg className="mr-[5px] h-[18px] w-3" viewBox="0 0 12 18" aria-hidden="true">
        <path d="M3.500 1.500h5v9h-5zM1 8v5h10V8M6 13v4M3 17h6" fill="none" stroke="#222" strokeWidth="1.200" />
      </svg>
    </label>
    <svg className="ml-[15px] h-4 w-[17px] shrink-0" viewBox="0 0 17 16" aria-hidden="true">
      <path d="M1 0v3h10V0M1 16v-3h10v3M1 5.500h10v5H1zM15 0v3M15 7v9" fill="none" stroke="#fff" strokeWidth="1.300" />
      <path d="M13.500 4h3v3h-3z" fill="#fff" />
    </svg>
    <svg className="ml-[31px] h-[22px] w-[22px] shrink-0" viewBox="0 0 22 22" aria-hidden="true">
      <circle cx="6.500" cy="6" r="5.500" fill="#e2e2e2" />
      <circle cx="16" cy="6.500" r="5.500" fill="#e2e2e2" />
      <circle cx="15.500" cy="16" r="5.500" fill="#e2e2e2" />
      <circle cx="6" cy="15.500" r="5.500" fill="#e2e2e2" />
      <path d="M11 11Q4 12 1 8M11 11q-1-7 4-10M11 11q7-1 10 3M11 11q1 7-4 10" fill="none" stroke="#07181d" strokeWidth="1.500" />
    </svg>
    <label className="ml-[15px] flex h-[30px] w-[150px] shrink-0 items-center border border-[#686868] bg-[#474747] px-1">
      <svg className="h-5 w-5" viewBox="0 0 20 20" aria-hidden="true">
        <path d="M16 14q-2 4-6 4-7 0-7-8t7-7q7 0 7 7H4" fill="none" stroke="#2f9ae8" strokeWidth="3" />
        <path d="M1 18Q-1 14 7 7T18 2" fill="none" stroke="#6cc3ff" strokeWidth="1.500" />
      </svg>
      <input placeholder="搜索网页和文件" className="ml-[3px] w-0 flex-1 outline-none placeholder:text-[#aaa]" />
      <svg className="h-[18px] w-[18px]" viewBox="0 0 18 18" aria-hidden="true">
        <circle cx="8" cy="8" r="6.500" fill="none" stroke="#aaa" />
        <path d="m13 13 4 4" stroke="#aaa" />
      </svg>
    </label>
    <svg className="ml-[13px] h-[30px] w-[30px] shrink-0" viewBox="0 0 30 30" aria-hidden="true">
      <path d="M11 16q1-4 4-1 1 5-4 5-6-1-4-7 4-5 10-1 4 7-2 12-8 3-12-3-2-8 4-12" fill="none" stroke="#ddd" strokeWidth="1.600" />
      <path d="M15 11q2-1 2-5 1-4 4-4t4 4q0 4 2 5zM19 12h4v2h-4z" fill="#e9a500" />
    </svg>
    <div className="ml-[14px] flex h-full items-center gap-[9px]">
      <button aria-label="PDF" className="flex h-full w-10 flex-col items-center border-b-[3px] border-[#76b9ed] pt-2">
        <span className="h-6 w-6 rounded border border-[#d88a4c] bg-[#c4610f] text-center text-[10px] leading-[22px] font-bold text-[#ffe6c8]">PDF</span>
      </button>
      <button aria-label="GGJ2013" className="flex h-full w-10 flex-col items-center border-b-[3px] border-[#76b9ed] pt-2">
        <Logo className="h-6 w-6" />
      </button>
      <button aria-label="笔记" className="flex h-full w-10 flex-col items-center border-b-[3px] border-[#76b9ed] pt-2">
        <svg className="h-6 w-6" viewBox="0 0 24 24">
          <rect width="24" height="24" rx="2" fill="#f0a51e" />
          <path d="M3 5 16 4l4 1v15L5 21z" fill="#fffbe9" />
          <path d="M6 9h8M6 12h7M7 15h4" stroke="#d6952a" strokeWidth="1.500" />
          <path d="m12 17 9-14" stroke="#7c4418" strokeWidth="2.500" />
        </svg>
      </button>
    </div>
    <div className="ml-auto flex h-full w-[17px] shrink-0 flex-col items-center justify-between bg-[#f2f2f2] py-1 text-[#555]">
      <Chevron dir="up" />
      <Chevron dir="down" />
    </div>
    <div className="ml-[22px] flex shrink-0 items-center">
      <TrayIcon d="M2 17q0-5 4-5t4 5M6 12a2.500 2.500 0 1 1 .1 0M10 9q1-2 4-2t4 5M14 7a2.500 2.500 0 1 1 .1 0" className="w-[18px]" />
      <TrayIcon d="m2 14 8-8 8 8" className="ml-[20px] w-3" />
      <TrayIcon d="M7 7h12v8H7zM1 5v3h4V5M2 2v3M4 2v3M3 8v5h4" className="ml-[10px] w-4" />
      <TrayIcon d="M2 17Q3 4 17 3M6 17q1-8 11-9M10 17q1-4 7-5M14 17h3v-2" className="ml-[11px] w-[14px]" />
      <TrayIcon d="M1 8h4l4-4v12l-4-4H1zM12 7q2 3 0 6M14 5q3 5 0 10M17 3q4 7 0 14" className="ml-[7px] w-4" />
      <TrayIcon d="M1 4h18v12H1zM3 7h14M3 10h14M5 13h10" className="ml-[9px] w-[23px]" />
      <span className="ml-[10px] text-[14px]">英</span>
      <svg className="ml-[13px] h-4 w-4" viewBox="0 0 16 16" aria-hidden="true">
        <path d="m0 3 14-3 2 13-13 3z" fill="#f4511e" />
        <path d="M12 4.500H7q-3 0-2 2.500l6 1q2 3-1 4H4" fill="none" stroke="#fff" strokeWidth="2" />
      </svg>
      <div className="ml-[17px] w-[60px] text-center leading-[19px]">
        <div>16:28</div>
        <div>2018/11/1</div>
      </div>
      <svg className="mr-[12px] ml-[18px] h-[26px] w-6" viewBox="0 0 24 26" aria-hidden="true">
        <path d="M0 2h16v12H8l-3 4v-4H0z" fill="#fff" />
        <path d="M3 5h10M3 8h10M3 11h6" stroke="#07181d" />
        <circle cx="16" cy="17" r="8" fill="#333" stroke="#999" />
        <text x="16" y="21" fill="#fff" fontSize="12" textAnchor="middle">2</text>
      </svg>
      <span className="mr-1 h-10 w-px bg-[#555]" />
    </div>
  </div>
);

const App = () => {
  return (
    <div className="relative flex h-screen flex-col overflow-hidden bg-[#f0f0f0] font-['Noto_Sans','Noto_Sans_CJK_SC',sans-serif] text-[12px] leading-4 text-black">
      <header className="flex h-[23px] shrink-0 items-center bg-white pl-[2px] text-[#999]">
        <Logo className="h-4 w-4 shrink-0" />
        <h1 className="ml-[6px] flex flex-1 gap-2 whitespace-nowrap">
          <span>广联达BIM钢筋算量软件 GGJ2013</span>
          <span>-</span>
          <span>[C:\Users\Administrator.PC-20141127NRHM\Desktop\白龙村-2018-02-03-20-08-17(2666版本).GGJ12]</span>
        </h1>
        <svg className="mr-[20px] h-[11px] w-[101px] shrink-0" viewBox="0 0 101 11" aria-hidden="true">
          <path d="M0 5.500h10M45.500 2.500h8v8h-8zM47.500 2V.5h7v7H54M91 .5l10 10M101 .5l-10 10" fill="none" stroke="#888" />
        </svg>
      </header>
      <div className="flex h-7 shrink-0 items-start justify-end pt-px">
        <span className="mr-[2px] h-6 w-6 bg-gradient-to-r from-[#fbfbfb] to-[#f0f0f0]" />
        <Group className="pr-[6px] pl-1">
          <svg className="h-4 w-4" viewBox="0 0 16 16" aria-hidden="true">
            <rect width="16" height="16" rx="3" fill="#3f9fd0" />
            <circle cx="8" cy="6" r="3" fill="#fff" />
            <path d="M2 13q1-4 4-4l2 1 2-1q3 0 4 4z" fill="#fff" />
          </svg>
          <button className="ml-[5px] flex items-center">
            13907298339
            <span className="ml-2">
              <Arrow />
            </span>
          </button>
          <span className="ml-[9px]">造价豆:0</span>
          <svg className="ml-[10px] h-4 w-3" viewBox="0 0 12 16" aria-hidden="true">
            <path d="M0 12q2-2 2-6 0-5 4-5t4 5q0 4 2 6zM4 13h4v2H4z" fill="#2f8eea" />
          </svg>
          <button className="ml-[9px] flex items-center">
            <svg className="h-4 w-4" viewBox="0 0 16 16" aria-hidden="true">
              <path d="M.5.5h15v11h-4v4l-4-4h-7z" fill="#fff" stroke="#2f8eea" />
              <path d="M3 6h2M7 6h2M11 6h2" stroke="#2f8eea" strokeWidth="1.500" />
            </svg>
            <span className="ml-1">我要建议</span>
          </button>
        </Group>
      </div>
      <nav className="flex h-7 shrink-0 items-start">
        <Group className="w-[152px] pl-1">
          <button aria-label="新建">
            <Icon name="file" />
          </button>
          <button aria-label="打开" className="ml-2 flex items-center gap-[6px]">
            <Icon name="folderOpen" />
            <Arrow />
          </button>
          <button aria-label="保存" className="mr-[6px] ml-2">
            <Icon name="save" />
          </button>
          <span className="h-6 w-px bg-[#aaa]" />
          <button aria-label="撤销" className="ml-[7px] flex items-center gap-[6px]">
            <Icon name="undo" />
            <Arrow />
          </button>
          <More />
        </Group>
        <Group className="ml-px w-[548px] pl-1">
          <Tools items={fileTools} />
          <More />
        </Group>
        <Group className="ml-1 flex-1">
          <div className="mr-[5px] flex items-center bg-white pl-[2px]">
            <Icon name="rect2d" />
            <Combo label="视图" value="二维" className="w-[43px]" />
          </div>
          <Tools items={viewTools} />
          <More />
        </Group>
      </nav>
      <main className="flex min-h-0 flex-1">
        <Sidebar />
        <div className="flex min-w-0 flex-1 flex-col">
          <div className="flex h-7 shrink-0 items-center pl-px">
            <Group>
              <Grip />
              <Tools items={editTools} />
            </Group>
          </div>
          <div className="flex h-7 shrink-0 items-center pl-px">
            <Group>
              <Grip />
              <Combo label="楼层" value="基础层" className="mr-[3px] -ml-[2px] w-[57px]" />
              <Combo label="构件类别" value="柱" className="mr-[3px] w-[69px]" />
              <Combo label="构件类型" value="框柱" className="mr-[3px] w-[69px]" />
              <Combo label="构件" value="KZ-1" className="mr-[5px] w-[69px]" />
              <Sep />
              <span className="w-px" />
              <Tools items={memberTools} />
            </Group>
            <Group>
              <Grip />
              <Tools items={axisTools} />
            </Group>
          </div>
          <div className="flex h-7 shrink-0 items-center overflow-hidden pl-px">
            <Group>
              <Grip />
              <Tool icon="select" label="选择" active />
              <button aria-label="选择方式" className="mr-2">
                <Arrow />
              </button>
              <Sep />
              <Tools items={drawTools} />
            </Group>
          </div>
          <Drawing />
          <SnapBar />
        </div>
      </main>
      <StatusBar />
      <Taskbar />
      <PropertyPanel />
      <div className="absolute -top-[31px] left-[716px] flex h-[50px] w-[50px] items-end justify-center rounded-full border-2 border-[#d5ddd5] bg-[#3fbf5f] pb-px text-[13px] font-bold text-white shadow-md">70</div>
    </div>
  );
};

export default App;
